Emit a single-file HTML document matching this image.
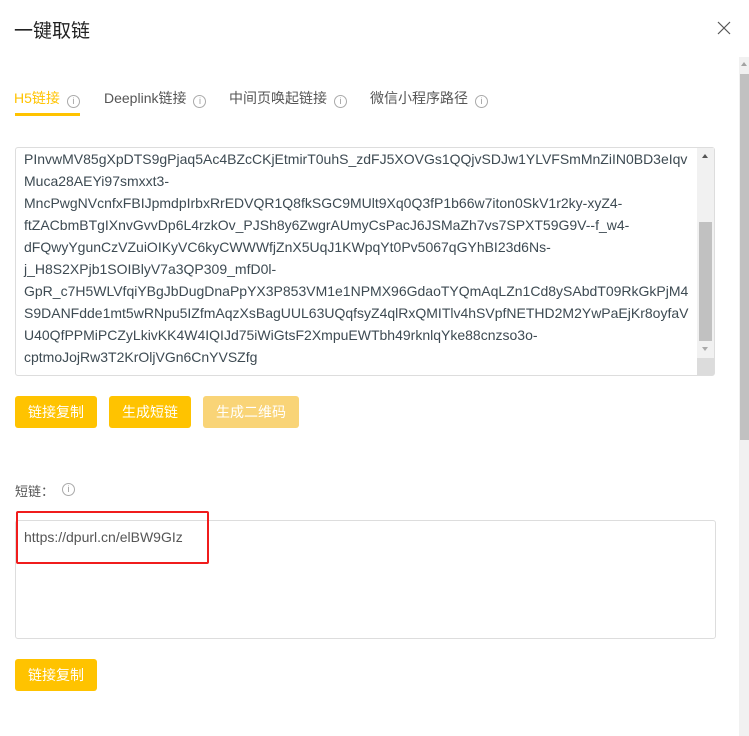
<!DOCTYPE html>
<html><head><meta charset="utf-8"><style>
*{margin:0;padding:0;box-sizing:border-box}
body{width:749px;height:736px;overflow:hidden;background:#fff;font-family:"Liberation Sans","Noto Sans CJK SC",sans-serif;position:relative}
.abs{position:absolute}
.title{left:14px;top:16px;font-size:19px;color:#222}
.close{left:717px;top:21px;width:14px;height:14px}
.tab{top:88px;font-size:14px;color:#555;white-space:nowrap}
.tab i{display:inline-block;width:13px;height:13px;border:1px solid #aaa;border-radius:50%;font-style:normal;font-size:9px;line-height:11px;text-align:center;color:#999;margin-left:7px;vertical-align:-1px}
.ta{border:1px solid #ddd;border-radius:3px;background:#fff}
.txt{left:24px;top:148px;width:672px;font-size:14px;line-height:22px;color:#3d4a52;word-break:break-all}
.btn{height:32px;border-radius:3px;background:#ffc300;color:#fff;font-size:14px;text-align:center;line-height:32px}
</style></head><body>
<div class="abs title">一键取链</div>
<svg class="abs close" viewBox="0 0 14 14"><path d="M1 1L13 13M13 1L1 13" stroke="#555" stroke-width="1.2"/></svg>
<div class="abs" style="left:739px;top:57px;width:10px;height:679px;background:#f1f1f1"></div>
<div class="abs" style="left:740px;top:74px;width:9px;height:366px;background:#c1c1c1"></div>
<div class="abs" style="left:741px;top:62px;width:0;height:0;border:3px solid transparent;border-bottom:4px solid #a3a3a3;border-top:0"></div>

<div class="abs tab" style="left:14px;color:#ffc300">H5链接<i>i</i></div>
<div class="abs" style="left:15px;top:113px;width:65px;height:3px;background:#ffc300"></div>
<div class="abs tab" style="left:104px">Deeplink链接<i>i</i></div>
<div class="abs tab" style="left:229px">中间页唤起链接<i>i</i></div>
<div class="abs tab" style="left:370px">微信小程序路径<i>i</i></div>

<div class="abs ta" style="left:15px;top:147px;width:700px;height:229px"></div>
<div class="abs txt">PInvwMV85gXpDTS9gPjaq5Ac4BZcCKjEtmirT0uhS_zdFJ5XOVGs1QQjvSDJw1YLVFSmMnZiIN0BD3eIqv<br>Muca28AEYi97smxxt3-<br>MncPwgNVcnfxFBIJpmdpIrbxRrEDVQR1Q8fkSGC9MUlt9Xq0Q3fP1b66w7iton0SkV1r2ky-xyZ4-<br>ftZACbmBTgIXnvGvvDp6L4rzkOv_PJSh8y6ZwgrAUmyCsPacJ6JSMaZh7vs7SPXT59G9V--f_w4-<br>dFQwyYgunCzVZuiOIKyVC6kyCWWWfjZnX5UqJ1KWpqYt0Pv5067qGYhBI23d6Ns-<br>j_H8S2XPjb1SOIBlyV7a3QP309_mfD0l-<br>GpR_c7H5WLVfqiYBgJbDugDnaPpYX3P853VM1e1NPMX96GdaoTYQmAqLZn1Cd8ySAbdT09RkGkPjM4<br>S9DANFdde1mt5wRNpu5IZfmAqzXsBagUUL63UQqfsyZ4qlRxQMITlv4hSVpfNETHD2M2YwPaEjKr8oyfaV<br>U40QfPPMiPCZyLkivKK4W4IQIJd75iWiGtsF2XmpuEWTbh49rknlqYke88cnzso3o-<br>cptmoJojRw3T2KrOljVGn6CnYVSZfg</div>
<div class="abs" style="left:697px;top:148px;width:17px;height:227px;background:#f1f1f1"></div>
<div class="abs" style="left:699px;top:222px;width:13px;height:119px;background:#c1c1c1"></div>
<div class="abs" style="left:697px;top:358px;width:17px;height:17px;background:#dcdcdc"></div>
<div class="abs" style="left:702px;top:154px;border:3px solid transparent;border-bottom:4px solid #555;border-top:0"></div>
<div class="abs" style="left:702px;top:347px;border:3px solid transparent;border-top:4px solid #aaa;border-bottom:0"></div>

<div class="abs btn" style="left:15px;top:396px;width:82px">链接复制</div>
<div class="abs btn" style="left:109px;top:396px;width:82px">生成短链</div>
<div class="abs btn" style="left:203px;top:396px;width:96px;background:#f9d477">生成二维码</div>

<div class="abs" style="left:15px;top:481px;font-size:13px;color:#555">短链：</div>
<div class="abs" style="left:62px;top:483px;width:13px;height:13px;border:1px solid #aaa;border-radius:50%;font-size:9px;line-height:11px;text-align:center;color:#999">i</div>
<div class="abs ta" style="left:15px;top:520px;width:701px;height:119px"></div>
<div class="abs" style="left:24px;top:529px;font-size:14px;color:#555">https://dpurl.cn/elBW9GIz</div>
<div class="abs" style="left:16px;top:511px;width:193px;height:53px;border:2px solid #f01c1c;border-radius:2px"></div>

<div class="abs btn" style="left:15px;top:659px;width:82px">链接复制</div>
</body></html>
